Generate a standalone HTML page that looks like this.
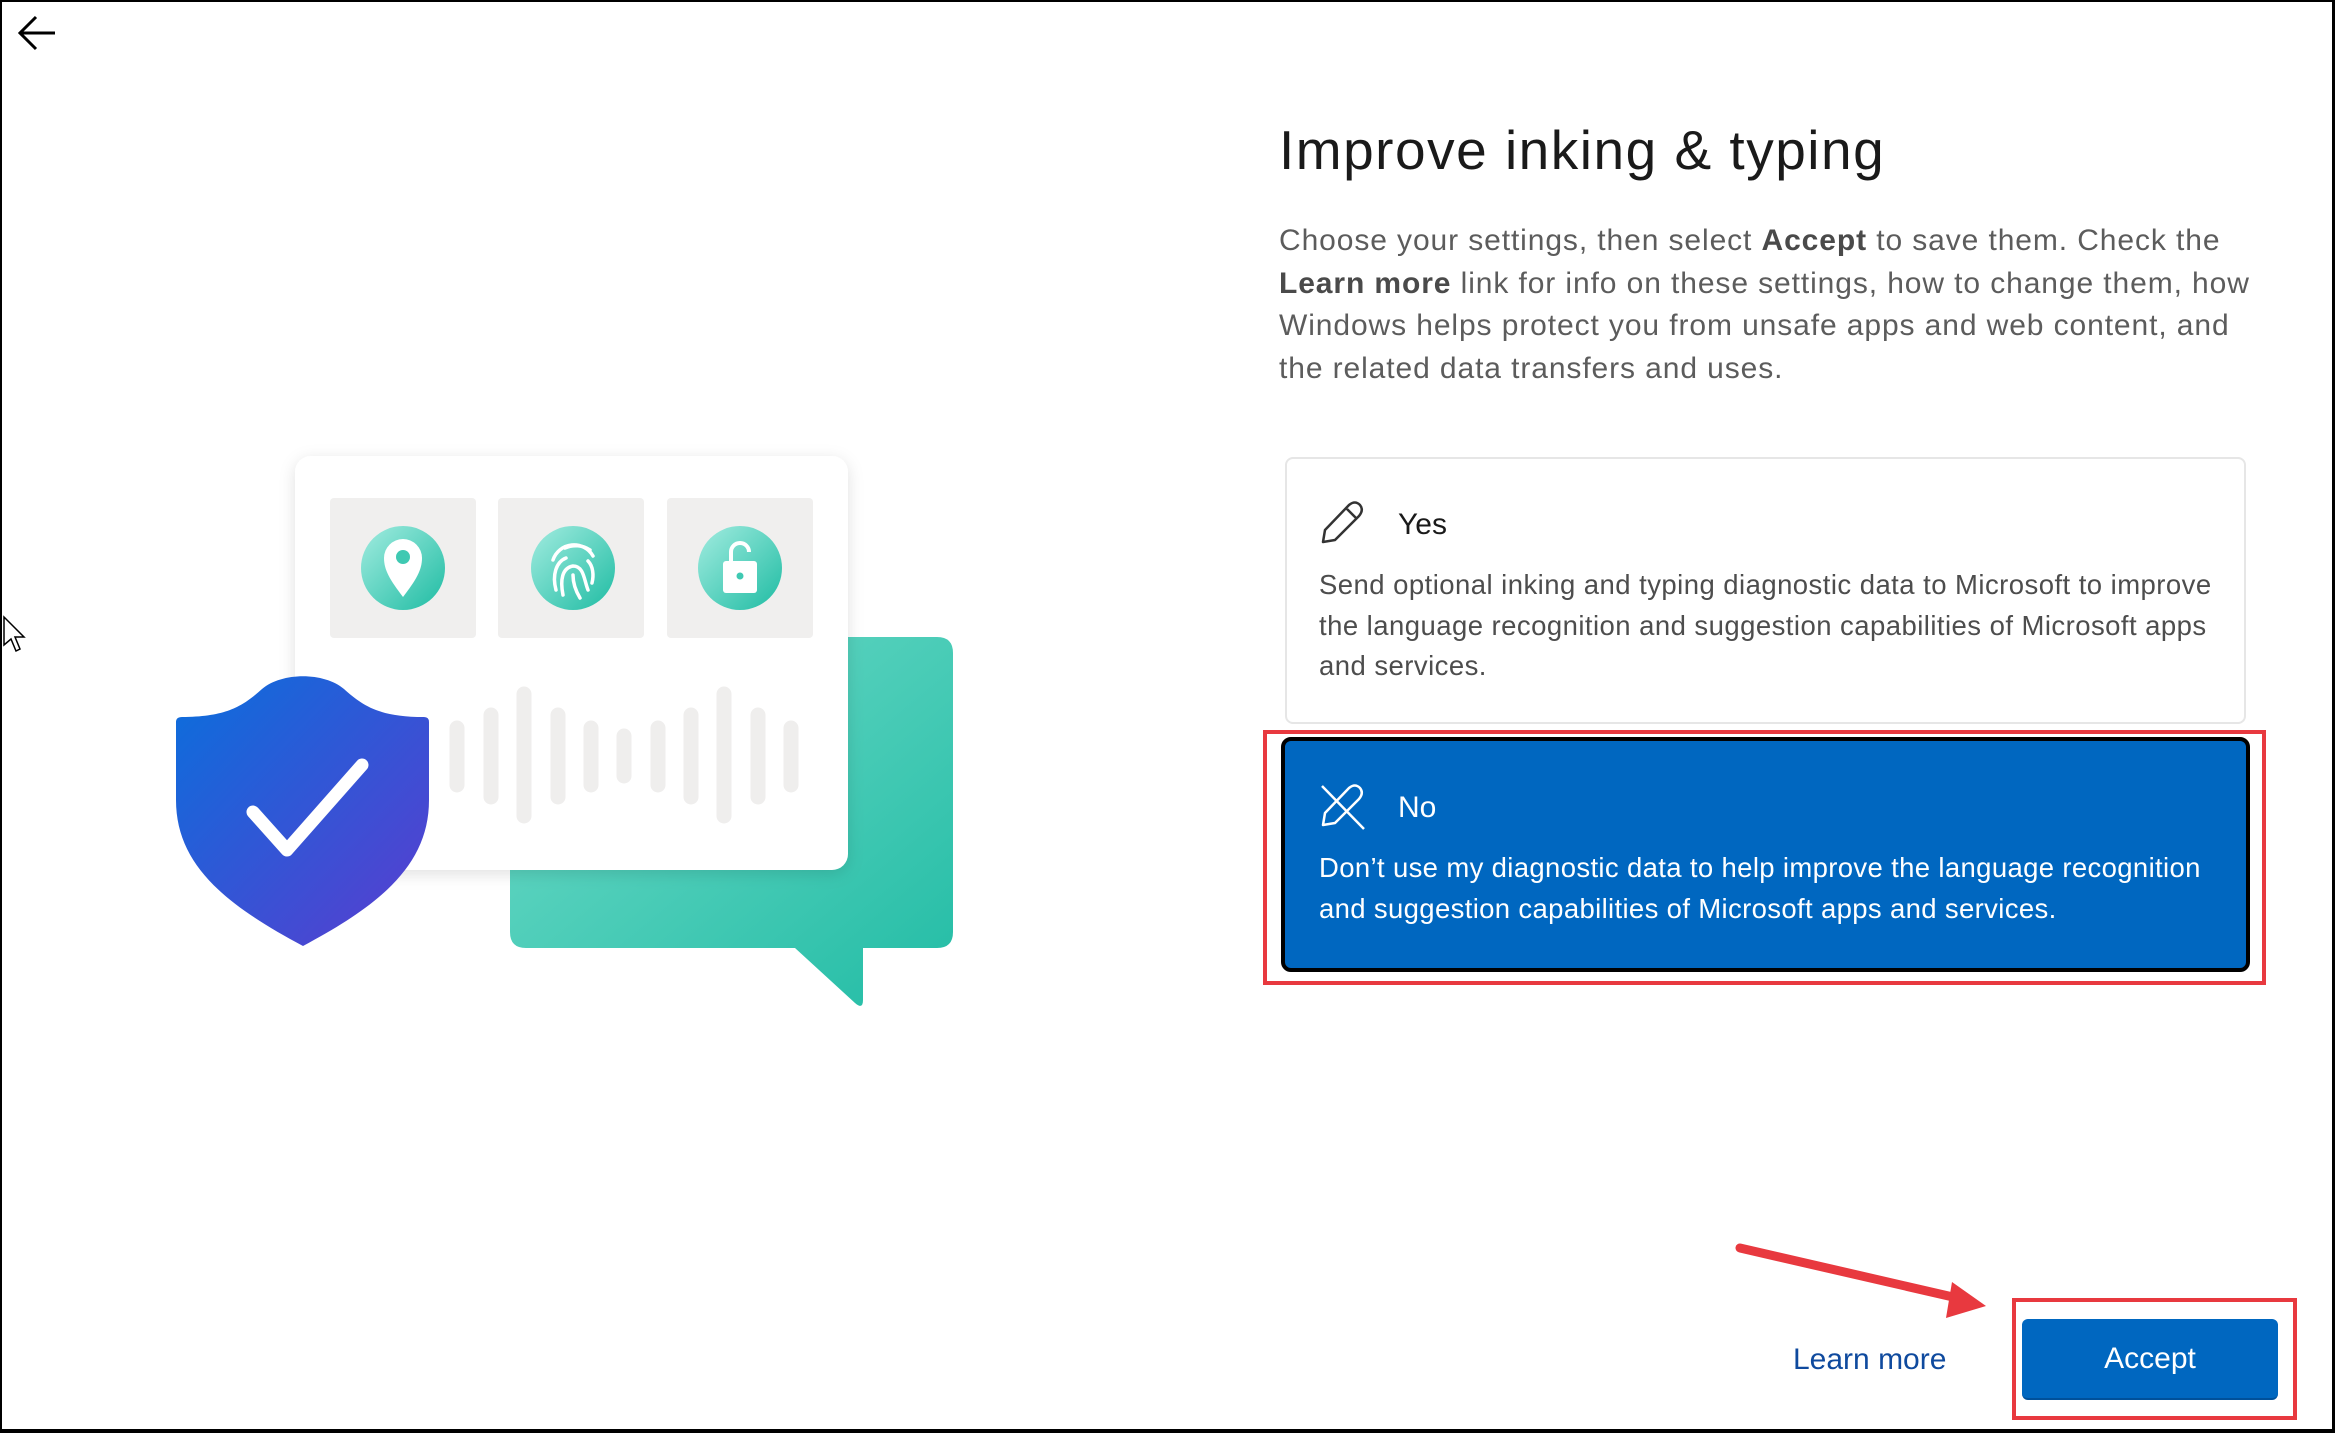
<!DOCTYPE html>
<html><head><meta charset="utf-8"><style>
*{margin:0;padding:0;box-sizing:border-box}
body{width:2335px;height:1433px;position:relative;background:#fff;font-family:"Liberation Sans",sans-serif;overflow:hidden}
.frame{position:absolute;left:0;top:0;width:2335px;height:1433px;border:2px solid #000;border-bottom-width:4px;border-right-width:3px;pointer-events:none}
.abs{position:absolute;white-space:nowrap}
h1{position:absolute;left:1279px;top:118px;font-size:55px;font-weight:400;color:#1a1a1a;white-space:nowrap;letter-spacing:1.5px}
.para{left:1279px;top:220px;font-size:30px;line-height:42.5px;color:#5c5c5c;letter-spacing:0.9px}
.para b{color:#4a4a4a}
.card{position:absolute;left:1285px;top:457px;width:961px;height:267px;border:2px solid #e6e6e6;border-radius:8px;background:#fff}
.no{position:absolute;left:1281px;top:737px;width:969px;height:235px;border:4px solid #000;border-radius:10px;background:#0067c0}
.red{position:absolute;border:4px solid #e8393f}
</style></head><body>
<svg class="abs" style="left:0;top:0" width="80" height="70"><path d="M55,33 H21 M36,17 L20,33 L36,49" stroke="#000" stroke-width="3" fill="none"/></svg>
<svg class="abs" style="left:2px;top:615px" width="28" height="45"><path d="M2,2 L2,30 L9,24 L14,36 L18,34 L13,22 L22,22 Z" fill="#fff" stroke="#000" stroke-width="1.5"/></svg>

<svg class="abs" style="left:0;top:400px" width="1100" height="660" viewBox="0 400 1100 660">
<defs>
<linearGradient id="t" x1="0" y1="0" x2="1" y2="1"><stop offset="0" stop-color="#72dcc9"/><stop offset="1" stop-color="#22bca5"/></linearGradient>
<linearGradient id="s" x1="0" y1="0" x2="1" y2="1"><stop offset="0" stop-color="#0a6fdc"/><stop offset="1" stop-color="#5b3ccf"/></linearGradient>
<linearGradient id="c" x1="0" y1="0" x2="1" y2="1"><stop offset="0" stop-color="#a2ece0"/><stop offset="1" stop-color="#1fbca3"/></linearGradient>
<filter id="sh" x="-20%" y="-20%" width="140%" height="140%"><feDropShadow dx="0" dy="4" stdDeviation="8" flood-opacity="0.12"/></filter>
</defs>
<path d="M526,637 H937 Q953,637 953,653 V932 Q953,948 937,948 H863 V1000 Q863,1010 855,1003 L795,948 H526 Q510,948 510,932 V653 Q510,637 526,637 Z" fill="url(#t)"/>
<rect x="295" y="456" width="553" height="414" rx="16" fill="#fff" filter="url(#sh)"/>
<g fill="#f0efee"><rect x="330" y="498" width="146" height="140" rx="4"/><rect x="498" y="498" width="146" height="140" rx="4"/><rect x="667" y="498" width="146" height="140" rx="4"/></g>
<circle cx="403" cy="568" r="42" fill="url(#c)"/><circle cx="573" cy="568" r="42" fill="url(#c)"/><circle cx="740" cy="568" r="42" fill="url(#c)"/>
<path d="M403,597 C390,580 384,570 384,558 A19,19 0 0 1 422,558 C422,570 416,580 403,597 Z" fill="#fff"/><circle cx="403" cy="557" r="7" fill="#3fc9b2"/>
<g fill="none" stroke="#fff" stroke-width="3.5" stroke-linecap="round">
<path d="M553,560 A22,22 0 0 1 593,556"/><path d="M556,590 C552,575 556,562 566,558"/><path d="M563,595 C560,580 562,568 573,566 C584,566 584,580 588,590"/><path d="M573,575 C573,585 577,593 580,598"/><path d="M592,583 C594,575 593,566 588,561"/><path d="M565,548 A26,26 0 0 1 590,550"/>
</g>
<path d="M731,561 V552 A9,9 0 0 1 749,552" fill="none" stroke="#fff" stroke-width="4"/>
<rect x="723" y="561" width="34" height="32" rx="3" fill="#fff"/><circle cx="740" cy="576" r="3.5" fill="#3fc9b2"/>
<g stroke="#efeeed" stroke-width="15" stroke-linecap="round">
<path d="M457,728V785M491,715V797M524,694V816M558,715V797M591,728V785M624,736V776M658,728V785M691,715V797M724,694V816M758,715V797M791,728V785"/>
</g>
<path d="M176,722 Q176,717 182,717 C228,717 244,705 262,689 C282,672 324,672 344,689 C362,705 378,717 424,717 Q429,717 429,722 L429,800 C429,865 380,905 303,946 C226,905 176,865 176,800 Z" fill="url(#s)"/>
<path d="M253,812 L287,850 L362,765" fill="none" stroke="#fff" stroke-width="13" stroke-linecap="round" stroke-linejoin="round"/>
</svg>

<h1>Improve inking &amp; typing</h1>
<div class="abs para">Choose your settings, then select <b>Accept</b> to save them. Check the<br><b>Learn more</b> link for info on these settings, how to change them, how<br>Windows helps protect you from unsafe apps and web content, and<br>the related data transfers and uses.</div>

<div class="card"></div>
<svg class="abs" style="left:1319px;top:500px" width="50" height="46"><path d="M4,42 L6,30 L30,5 Q36,0 41,5 Q45,10 40,16 L16,40 Z M27,8 L37,18 M4,42 L16,40" fill="none" stroke="#333" stroke-width="2.5" stroke-linejoin="round"/></svg>
<div class="abs" style="left:1398px;top:508px;font-size:30px;color:#1a1a1a">Yes</div>
<div class="abs" style="left:1319px;top:565px;font-size:27.5px;line-height:40.5px;color:#4d4d4d;letter-spacing:0.45px">Send optional inking and typing diagnostic data to Microsoft to improve<br>the language recognition and suggestion capabilities of Microsoft apps<br>and services.</div>

<div class="red" style="left:1263px;top:730px;width:1003px;height:255px"></div>
<div class="no"></div>
<svg class="abs" style="left:1319px;top:783px" width="50" height="48"><path d="M4,42 L6,30 L30,5 Q36,0 41,5 Q45,10 40,16 L16,40 Z M4,42 L16,40 M3,3 L45,46" fill="none" stroke="#fff" stroke-width="2.5" stroke-linejoin="round"/></svg>
<div class="abs" style="left:1398px;top:791px;font-size:30px;color:#fff">No</div>
<div class="abs" style="left:1319px;top:848px;font-size:27.5px;line-height:40.5px;color:#fff;letter-spacing:0.35px">Don’t use my diagnostic data to help improve the language recognition<br>and suggestion capabilities of Microsoft apps and services.</div>

<svg class="abs" style="left:1720px;top:1230px" width="290" height="100"><path d="M20,18 L246,70" stroke="#e8393f" stroke-width="9" stroke-linecap="round"/><path d="M232,52 L266,76 L226,88 Z" fill="#e8393f"/></svg>
<div class="abs" style="left:1793px;top:1343px;font-size:30px;color:#0f4a9e">Learn more</div>
<div class="red" style="left:2012px;top:1298px;width:285px;height:122px"></div>
<div class="abs" style="left:2022px;top:1319px;width:256px;height:81px;background:#0067c0;border-radius:6px;border-bottom:2px solid #00509a;color:#fff;font-size:30px;text-align:center;line-height:79px">Accept</div>
<div class="frame"></div>
</body></html>
